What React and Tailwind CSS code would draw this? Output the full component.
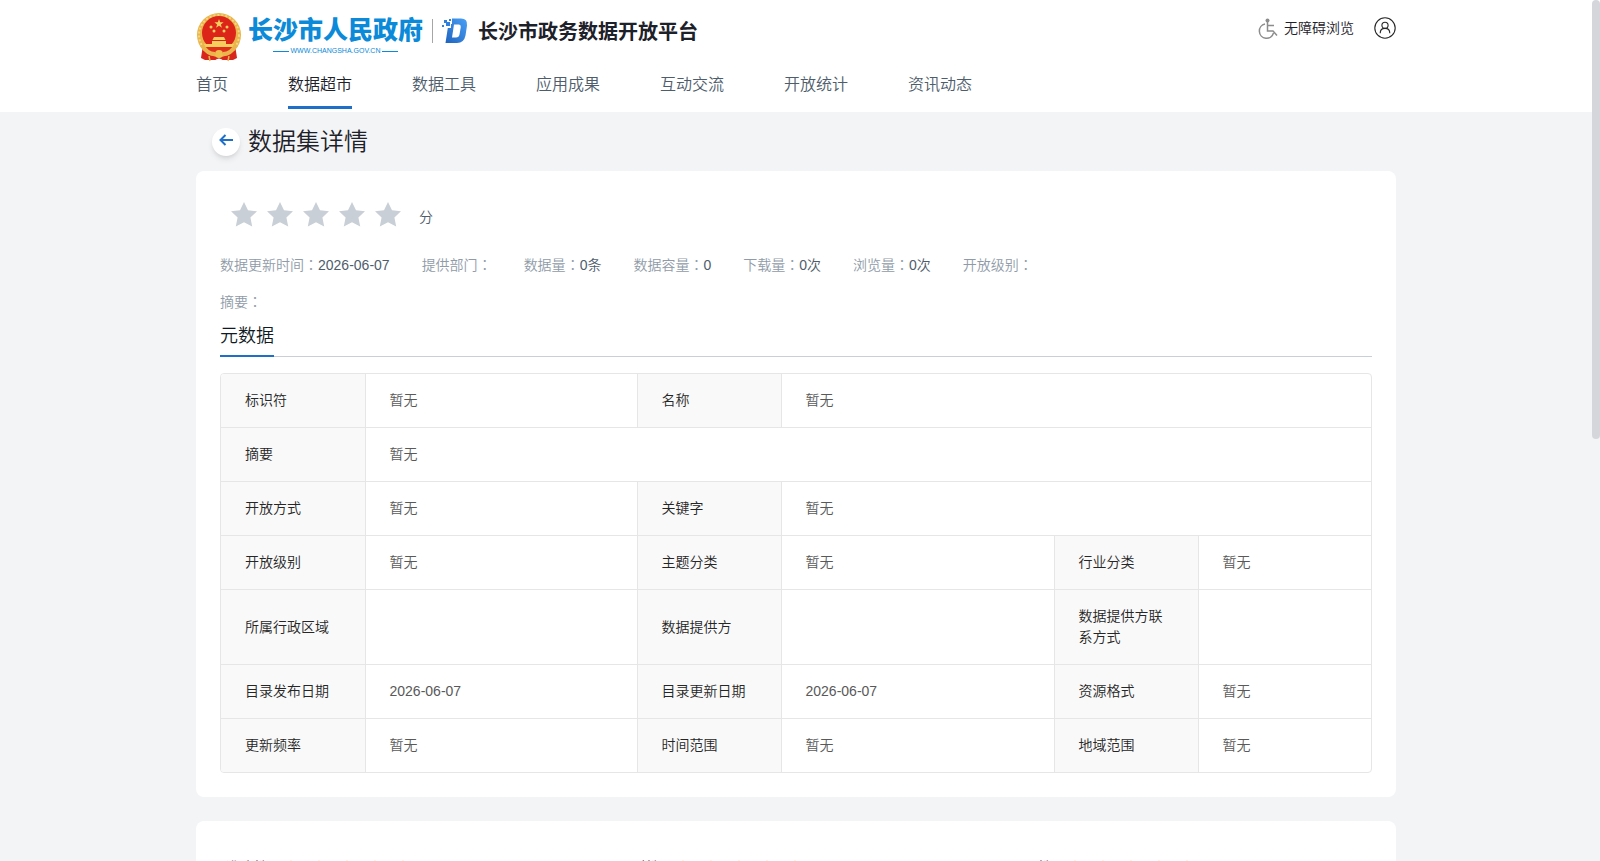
import React, { useState } from "react";

const navItems = ["首页", "数据超市", "数据工具", "应用成果", "互动交流", "开放统计", "资讯动态"];

const infoItems = [
  { label: "数据更新时间", value: "2026-06-07" },
  { label: "提供部门", value: "" },
  { label: "数据量", value: "0条" },
  { label: "数据容量", value: "0" },
  { label: "下载量", value: "0次" },
  { label: "浏览量", value: "0次" },
  { label: "开放级别", value: "" },
];

// span is the colSpan of the value cell
const metaRows = [
  [
    { label: "标识符", value: "暂无" },
    { label: "名称", value: "暂无", span: 3 },
  ],
  [{ label: "摘要", value: "暂无", span: 5 }],
  [
    { label: "开放方式", value: "暂无" },
    { label: "关键字", value: "暂无", span: 3 },
  ],
  [
    { label: "开放级别", value: "暂无" },
    { label: "主题分类", value: "暂无" },
    { label: "行业分类", value: "暂无" },
  ],
  [
    { label: "所属行政区域", value: "" },
    { label: "数据提供方", value: "" },
    { label: "数据提供方联系方式", value: "" },
  ],
  [
    { label: "目录发布日期", value: "2026-06-07" },
    { label: "目录更新日期", value: "2026-06-07" },
    { label: "资源格式", value: "暂无" },
  ],
  [
    { label: "更新频率", value: "暂无" },
    { label: "时间范围", value: "暂无" },
    { label: "地域范围", value: "暂无" },
  ],
];

const scoreItems = ["准确性", "及时性", "可用性"];

const Star = ({ className }) => (
  <svg viewBox="0 0 26 25" className={className} fill="currentColor">
    <path d="M13 0 L17 8.200 L26 9.300 L19.400 15.600 L21.200 24.500 L13 20.300 L4.800 24.500 L6.600 15.600 L0 9.300 L9 8.200 Z" />
  </svg>
);

// the TC face has the colon in the middle of its box
const Colon = () => <span className="font-['Noto_Sans_CJK_TC',sans-serif] leading-none">：</span>;

const Emblem = () => (
  <svg viewBox="0 0 46 50" className="h-[50px] w-[46px]">
    <path d="M7 33 L5 46 L9 48 L37 48 L41 46 L39 33 Z" fill="#d8261c" />
    <circle cx="23" cy="23" r="22" fill="#e9b54c" />
    <circle cx="23" cy="23" r="20" fill="none" stroke="#f5d783" strokeWidth="2" strokeDasharray="2 2" />
    <circle cx="23" cy="21" r="17" fill="#dc2418" />
    <g fill="#f4cf5e">
      <path d="M23 7 l1.2 3.2 3.4.1 -2.7 2.1 1 3.3 -2.9-1.9 -2.9 1.9 1-3.3 -2.7-2.1 3.4-.1z" />
      <circle cx="15" cy="15" r="1.500" />
      <circle cx="31" cy="15" r="1.500" />
      <circle cx="18" cy="19" r="1.500" />
      <circle cx="28" cy="19" r="1.500" />
      <path d="M18 25 h10 l1.500 3 h-13z" />
      <path d="M16 29 h14 v3 h8 v3 h-30 v-3 h8z" />
    </g>
    <path d="M8 35 H38 Q32 43 23 43 Q14 43 8 35Z" fill="#e0301c" />
    <path d="M6 33 Q11 42 19 42 M40 33 Q35 42 27 42" stroke="#e9b54c" strokeWidth="4" fill="none" />
    <circle cx="23" cy="42" r="4" fill="#f0c04f" />
    <path d="M13 44 L14 49 M33 44 L32 49" stroke="#e9b54c" strokeWidth="1.500" />
    <path d="M18 49 Q23 44 28 49" fill="#fff" />
  </svg>
);

const PlatformMark = () => (
  <svg viewBox="0 0 27 26" className="h-[26px] w-[27px]">
    <defs>
      <linearGradient id="mark" x1="0" y1="1" x2="1" y2="0">
        <stop offset="0" stopColor="#1f63bd" />
        <stop offset="1" stopColor="#4aa0f7" />
      </linearGradient>
    </defs>
    <path
      fillRule="evenodd"
      fill="url(#mark)"
      d="M11 0.500 H20 Q26.800 0.500 26 7.500 L24.500 17.500 Q23 25 16 25 H4.500 L6.800 10 H10 V6 H11 Z M13 6.500 L11 19.500 H15 Q18 19.500 18.500 16.500 L19.800 9 Q20 6.500 18 6.500 Z"
    />
    <path fill="#2f7fdc" d="M3 2h3v3h-3z M1 7h2v2h-2z M5 4h4v4h-4z M8 1h2v2h-2z" />
  </svg>
);

const App = () => {
  const [active, setActive] = useState("数据超市");
  const [score, setScore] = useState(0);

  return (
    <div className="min-h-screen bg-[#f3f4f6] pr-2 font-['Liberation_Sans','Noto_Sans_CJK_SC',sans-serif] text-sm font-[350] text-[#1d2129]">
      <header className="-mr-2 bg-white pr-2">
        <div className="mx-auto h-28 max-w-[1200px]">
          <div className="flex h-16 items-start justify-between">
            <div className="flex items-start pt-3">
              <Emblem />
              <a href="#gov" className="ml-[7px] flex w-[173px] flex-col items-center text-[#0a8ad8]">
                <span className="text-[25px] leading-9 font-black whitespace-nowrap">长沙市人民政府</span>
                <span className="flex items-center gap-0.5 text-[7px] leading-[6px]">
                  <i className="h-px w-4 bg-[#0a8ad8]" />
                  WWW.CHANGSHA.GOV.CN
                  <i className="h-px w-4 bg-[#0a8ad8]" />
                </span>
              </a>
              <i className="mt-[7px] ml-2.5 h-6 w-px bg-[#a6a6a6]" />
              <div className="ml-2 flex items-start gap-2.5 pt-1.5">
                <PlatformMark />
                <h1 className="text-xl leading-7 font-bold">长沙市政务数据开放平台</h1>
              </div>
            </div>
            <div className="flex items-center gap-5 pt-4">
              <a href="#accessible" className="flex items-center gap-1.5 leading-6">
                <svg viewBox="0 0 20 21" className="h-[21px] w-5" fill="none" stroke="#8c8c8c" strokeWidth="1.500">
                  <circle cx="9.500" cy="2.500" r="2" fill="#8c8c8c" stroke="none" />
                  <path d="M9.500 4 V13 H15 L19 17.500 M9.500 7.500 H16 M7 6 A7.200 7.200 0 1 0 15.500 15" />
                </svg>
                无障碍浏览
              </a>
              <button type="button" aria-label="用户">
                <svg viewBox="0 0 22 22" className="size-[22px]" fill="none" stroke="#262626" strokeWidth="1.100">
                  <circle cx="11" cy="11" r="10.200" />
                  <circle cx="11" cy="8.300" r="3.100" />
                  <path d="M6.200 16.200 C6.200 13 8.500 11.400 11 11.400 S15.800 13 15.800 16.200" />
                </svg>
              </button>
            </div>
          </div>
          <nav className="flex gap-15 text-base">
            {navItems.map((item) => (
              <button
                type="button"
                key={item}
                onClick={() => setActive(item)}
                className={
                  item === active
                    ? "h-[45px] border-b-3 border-[#1f6ec7] text-[#1d2129]"
                    : "h-[45px] border-b-3 border-transparent text-[#4e5d6c]"
                }
              >
                {item}
              </button>
            ))}
          </nav>
        </div>
      </header>

      <main className="mx-auto max-w-[1200px]">
        <div className="flex h-[59px] items-center gap-2 pl-4">
          <button
            type="button"
            aria-label="返回"
            className="flex size-7 items-center justify-center rounded-full bg-white pb-1 shadow-md"
          >
            <svg viewBox="0 0 14 12" className="h-3 w-3.5" fill="none" stroke="#1f6ec7" strokeWidth="2">
              <path d="M6.500 1 L1.500 6 L6.500 11 M1.500 6 H14" />
            </svg>
          </button>
          <h2 className="text-2xl">数据集详情</h2>
        </div>

        <section className="rounded-lg bg-white p-6">
          <div className="flex h-[38px] items-center pl-[11px]">
            <div className="flex gap-2.5">
              {[1, 2, 3, 4, 5].map((n) => (
                <button type="button" key={n} aria-label={`${n}分`} onClick={() => setScore(n)}>
                  <Star className={n <= score ? "h-[25px] w-[26px] text-[#f7ba2a]" : "h-[25px] w-[26px] text-[#c9cfd6]"} />
                </button>
              ))}
            </div>
            <span className="ml-[18px] pt-1.5 text-[#4e5d6c]">分</span>
          </div>

          <div className="mt-5 flex flex-wrap gap-x-8 text-[#4e5d6c]">
            {infoItems.map((item) => (
              <p key={item.label} className="leading-6">
                <span className="text-[#8f9ba8]">
                  {item.label}
                  <Colon />
                </span>
                {item.value}
              </p>
            ))}
          </div>
          <p className="mt-[13px] leading-6 text-[#8f9ba8]">
            摘要
            <Colon />
          </p>

          <div className="flex h-[43px] border-b border-[#c9cfd6]">
            <h3 className="-mb-px border-b-2 border-[#1f6ec7] pt-2 text-lg text-[#0f1a24]">元数据</h3>
          </div>

          <div className="mt-4 overflow-hidden rounded border border-[#e6e6e6]">
            <table className="w-full table-fixed border-collapse text-left leading-[21px]">
              <colgroup>
                <col className="w-36" />
                <col className="w-[272px]" />
                <col className="w-36" />
                <col className="w-[273px]" />
                <col className="w-36" />
                <col />
              </colgroup>
              <tbody>
                {metaRows.map((row, i) => (
                  <tr key={i} className="border-b border-[#e6e6e6] last:border-b-0">
                    {row.map((cell) => (
                      <React.Fragment key={cell.label}>
                        <th className="border-r border-[#e6e6e6] bg-[#f9f9f9] px-6 py-4 font-[350] text-[#262626]">
                          {cell.label}
                        </th>
                        <td
                          colSpan={cell.span || 1}
                          className="border-r border-[#e6e6e6] px-6 py-4 text-[#595959] last:border-r-0"
                        >
                          {cell.value}
                        </td>
                      </React.Fragment>
                    ))}
                  </tr>
                ))}
              </tbody>
            </table>
          </div>
        </section>

        <section className="mt-6 grid grid-cols-3 rounded-lg bg-white px-3 pt-[35px] pb-9">
          {scoreItems.map((label) => (
            <div key={label} className="flex items-center pl-[18px] text-[#4e5d6c]">
              <span>
                {label}
                <Colon />
              </span>
              <span className="flex gap-2.5 pt-1 text-[#f7ba2a]">
                {[1, 2, 3, 4, 5].map((n) => (
                  <Star key={n} className="size-[18px]" />
                ))}
              </span>
            </div>
          ))}
        </section>
      </main>

      <div className="fixed top-0 right-0 h-[51vh] w-2 rounded-full bg-[#d5d6db]" />
    </div>
  );
};

export default App;
